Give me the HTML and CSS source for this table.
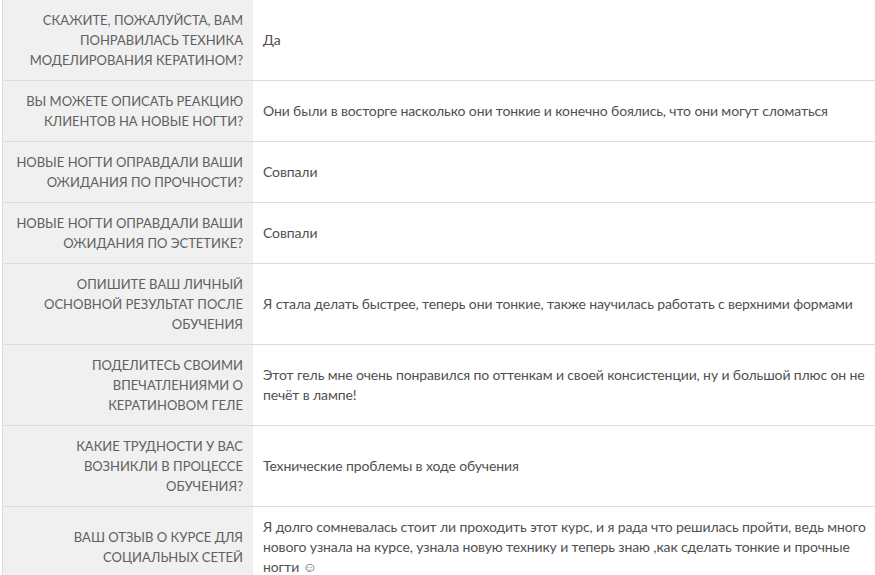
FILE: index.html
```html
<!DOCTYPE html>
<html lang="ru">
<head>
<meta charset="utf-8">
<link rel="stylesheet" href="styles.css">
</head>
<body>
<div class="table">
  <div class="row">
    <div class="q">Скажите, пожалуйста, вам понравилась техника моделирования кератином?</div>
    <div class="a">Да</div>
  </div>
  <div class="row">
    <div class="q">Вы можете описать реакцию клиентов на новые ногти?</div>
    <div class="a">Они были в восторге насколько они тонкие и конечно боялись, что они могут сломаться</div>
  </div>
  <div class="row">
    <div class="q">Новые ногти оправдали ваши ожидания по прочности?</div>
    <div class="a">Совпали</div>
  </div>
  <div class="row">
    <div class="q">Новые ногти оправдали ваши ожидания по эстетике?</div>
    <div class="a">Совпали</div>
  </div>
  <div class="row">
    <div class="q">Опишите ваш личный основной результат после обучения</div>
    <div class="a">Я стала делать быстрее, теперь они тонкие, также научилась работать с верхними формами</div>
  </div>
  <div class="row">
    <div class="q">Поделитесь своими впечатлениями о кератиновом геле</div>
    <div class="a">Этот гель мне очень понравился по оттенкам и своей консистенции, ну и большой плюс он не печёт в лампе!</div>
  </div>
  <div class="row">
    <div class="q">Какие трудности у вас возникли в процессе обучения?</div>
    <div class="a">Технические проблемы в ходе обучения</div>
  </div>
  <div class="row">
    <div class="q">Ваш отзыв о курсе для социальных сетей</div>
    <div class="a">Я долго сомневалась стоит ли проходить этот курс, и я рада что решилась пройти, ведь много нового узнала на курсе, узнала новую технику и теперь знаю ,как сделать тонкие и прочные ногти ☺</div>
  </div>
</div>
</body>
</html>
```
FILE: styles.css
```css
html, body {
  margin: 0;
  padding: 0;
  background: #ffffff;
}
body {
  font-family: Lato, "Open Sans", sans-serif;
  font-size: 14px;
  line-height: 20px;
  color: #505050;
  overflow: hidden;
}
.table {
  margin-left: 2px;
  border-left: 1px solid #dcdcdc;
  width: 875px;
}
.row {
  display: grid;
  grid-template-columns: 250px 1fr;
  border-bottom: 1px solid #dcdcdc;
}
.q {
  background: #f0f0f0;
  text-transform: uppercase;
  text-align: right;
  font-size: 13px;
  color: #606060;
  padding: 10px 10px;
  display: flex;
  align-items: center;
  justify-content: flex-end;
}
.a {
  padding: 10px 10px 10px 10px;
  letter-spacing: -0.12px;
  display: flex;
  align-items: center;
}
```
